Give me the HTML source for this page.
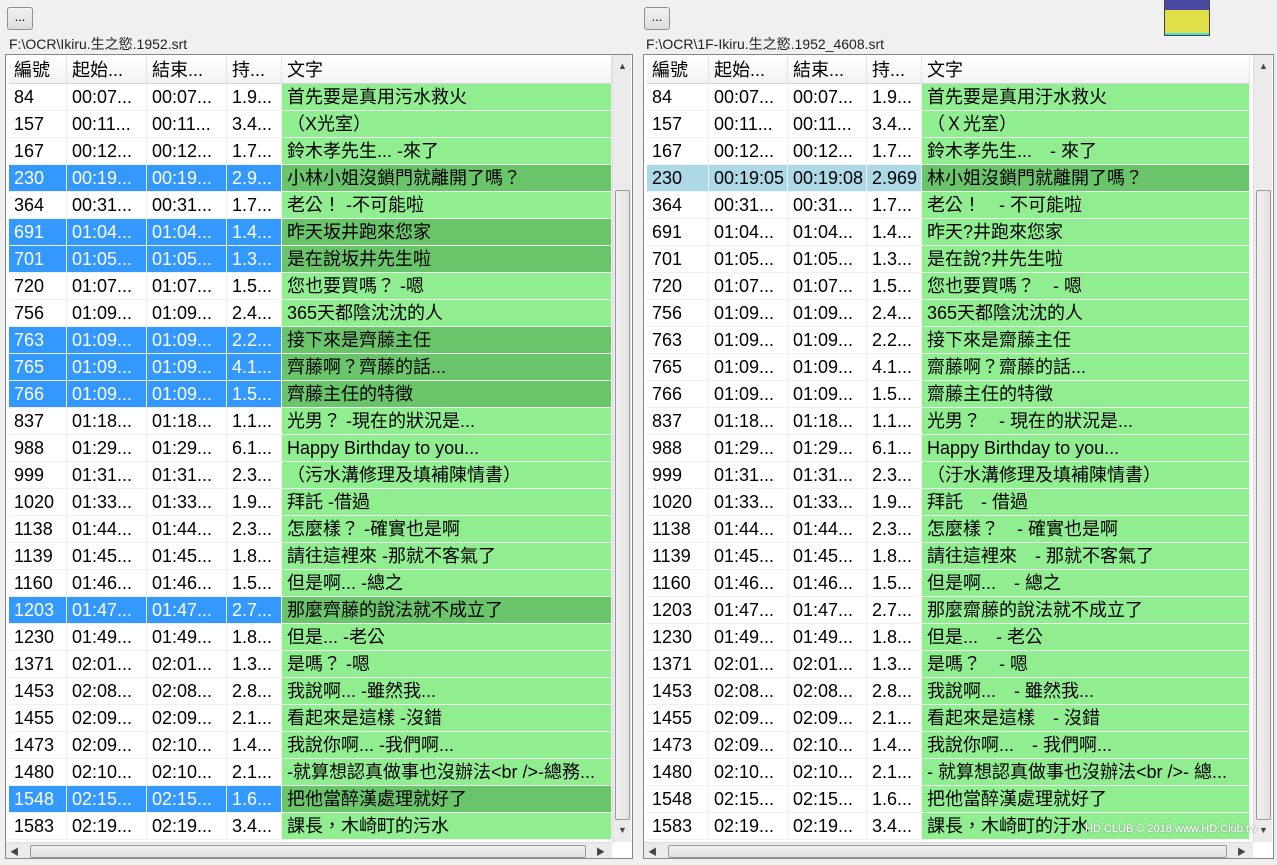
<!DOCTYPE html>
<html><head><meta charset="utf-8"><style>
*{margin:0;padding:0;box-sizing:border-box}
body{width:1277px;height:865px;background:#f0f0f0;position:relative;overflow:hidden;font-family:"Liberation Sans","Noto Sans CJK TC",sans-serif;color:#000}
.btn{position:absolute;top:7px;width:26px;height:23px;border:1px solid #8e8f8f;border-radius:3px;background:linear-gradient(#f2f2f2,#dcdcdc);font-size:13px;text-align:center;line-height:18px}
.path{position:absolute;top:34px;font-size:14px;color:#222}
.panel{position:absolute;top:54px;height:805px;background:#fff;border:1px solid #828790;overflow:hidden}
.c{position:absolute;height:27px;line-height:27px;font-size:18px;white-space:nowrap;overflow:hidden;padding-left:5px;border-right:1px solid #f0f0f0;border-bottom:1px solid #f0f0f0}
.h{position:absolute;top:2px;height:27px;line-height:27px;font-size:18px;padding-left:5px;background:linear-gradient(#fff,#f1f2f4);border-right:1px solid #e3e4e6;border-bottom:1px solid #d5d5d5}
.vs{position:absolute;top:0;width:19px;height:787px;background:#ebebeb;border-left:1px solid #ddd}
.thumb{position:absolute;left:2px;width:15px;top:135px;height:630px;background:linear-gradient(90deg,#f0f0f0,#e2e2e2);border:1px solid #9a9a9a;border-radius:2px}
.hs{position:absolute;top:787px;height:17px;background:#ebebeb;border-top:1px solid #ddd}
.hthumb{position:absolute;top:2px;height:13px;background:linear-gradient(#f0f0f0,#e0e0e0);border:1px solid #9a9a9a;border-radius:2px}
.ar{position:absolute;font-size:9px;color:#444}
</style></head><body>
<div class="btn" style="left:7px">...</div>
<div class="btn" style="left:644px">...</div>
<div class="path" style="left:9px">F:\OCR\Ikiru.生之慾.1952.srt</div>
<div class="path" style="left:646px">F:\OCR\1F-Ikiru.生之慾.1952_4608.srt</div>
<div style="position:absolute;left:1164px;top:0;width:46px;height:36px;border:1px solid #444;border-top:none;background:#e2e048"><div style="height:10px;background:#4848a0"></div><div style="position:absolute;bottom:0;left:0;right:0;height:2px;background:#3ee0e0"></div></div>
<div class="panel" id="L" style="left:5px;width:628px"></div>
<div class="panel" id="R" style="left:643px;width:631px"></div>
<div style="position:absolute;left:1085px;top:823px;font-size:11px;color:#fff;text-shadow:0 0 2px #888">HD CLUB © 2018 www.HD.Club.tw</div>
<script>
const L=[["84","00:07","00:07","1.9","首先要是真用污水救火"],["157","00:11","00:11","3.4","（X光室）"],["167","00:12","00:12","1.7","鈴木孝先生... -來了"],["230","00:19","00:19","2.9","小林小姐沒鎖門就離開了嗎？",1],["364","00:31","00:31","1.7","老公！ -不可能啦"],["691","01:04","01:04","1.4","昨天坂井跑來您家",1],["701","01:05","01:05","1.3","是在說坂井先生啦",1],["720","01:07","01:07","1.5","您也要買嗎？ -嗯"],["756","01:09","01:09","2.4","365天都陰沈沈的人"],["763","01:09","01:09","2.2","接下來是齊藤主任",1],["765","01:09","01:09","4.1","齊藤啊？齊藤的話...",1],["766","01:09","01:09","1.5","齊藤主任的特徵",1],["837","01:18","01:18","1.1","光男？ -現在的狀況是..."],["988","01:29","01:29","6.1","Happy Birthday to you..."],["999","01:31","01:31","2.3","（污水溝修理及填補陳情書）"],["1020","01:33","01:33","1.9","拜託 -借過"],["1138","01:44","01:44","2.3","怎麼樣？ -確實也是啊"],["1139","01:45","01:45","1.8","請往這裡來 -那就不客氣了"],["1160","01:46","01:46","1.5","但是啊... -總之"],["1203","01:47","01:47","2.7","那麼齊藤的說法就不成立了",1],["1230","01:49","01:49","1.8","但是... -老公"],["1371","02:01","02:01","1.3","是嗎？ -嗯"],["1453","02:08","02:08","2.8","我說啊... -雖然我..."],["1455","02:09","02:09","2.1","看起來是這樣 -沒錯"],["1473","02:09","02:10","1.4","我說你啊... -我們啊..."],["1480","02:10","02:10","2.1","-就算想認真做事也沒辦法&lt;br /&gt;-總務..."],["1548","02:15","02:15","1.6","把他當醉漢處理就好了",1],["1583","02:19","02:19","3.4","課長，木崎町的污水"]];
const RT=["首先要是真用汙水救火","（Ｘ光室）","鈴木孝先生...　- 來了","林小姐沒鎖門就離開了嗎？","老公！　- 不可能啦","昨天?井跑來您家","是在說?井先生啦","您也要買嗎？　- 嗯","365天都陰沈沈的人","接下來是齋藤主任","齋藤啊？齋藤的話...","齋藤主任的特徵","光男？　- 現在的狀況是...","Happy Birthday to you...","（汙水溝修理及填補陳情書）","拜託　- 借過","怎麼樣？　- 確實也是啊","請往這裡來　- 那就不客氣了","但是啊...　- 總之","那麼齋藤的說法就不成立了","但是...　- 老公","是嗎？　- 嗯","我說啊...　- 雖然我...","看起來是這樣　- 沒錯","我說你啊...　- 我們啊...","- 就算想認真做事也沒辦法&lt;br /&gt;- 總...","把他當醉漢處理就好了","課長，木崎町的汙水"];
function build(id,cols,right){
 const p=document.getElementById(id);let h="";
 const hd=["編號","起始...","結束...","持...","文字"];
 cols.forEach((c,i)=>{h+=`<div class="h" style="left:${c[0]}px;width:${c[1]}px">${hd[i]}</div>`});
 L.forEach((r,k)=>{const y=29+27*k;
  for(let i=0;i<5;i++){let t=i==0?r[0]:i<3?r[i]+"...":i==3?r[3]+"...":(right?RT[k]:r[4]);
   let bg="#fff",col="#000";
   if(i==4){bg=(r[5]&&!right)||(right&&k==3)?"#6ac46a":"#90ee90";}
   else if(r[5]&&!right){bg="#3399ff";col="#fff";}
   else if(right&&k==3){bg="#add8e6";t=["230","00:19:05","00:19:08","2.969"][i];}
   h+=`<div class="c" style="left:${cols[i][0]}px;width:${cols[i][1]}px;top:${y}px;background:${bg};color:${col}">${t}</div>`;}
 });
 const w=p.clientWidth;
 h+=`<div class="vs" style="left:${w-20}px"><div class="ar" style="left:5px;top:6px">▲</div><div class="thumb"></div><div class="ar" style="left:5px;top:770px">▼</div></div>`;
 h+=`<div class="hs" style="left:0;width:${w-20}px"><div class="ar" style="left:4px;top:2px">◀</div><div class="hthumb" style="left:24px;width:${w-70}px"></div><div class="ar" style="left:${w-36}px;top:2px">▶</div></div>`;
 p.innerHTML=h;
}
build("L",[[3,58],[61,80],[141,80],[221,55],[276,330]],0);
build("R",[[3,62],[65,79],[144,79],[223,55],[278,328]],1);
</script>
</body></html>
